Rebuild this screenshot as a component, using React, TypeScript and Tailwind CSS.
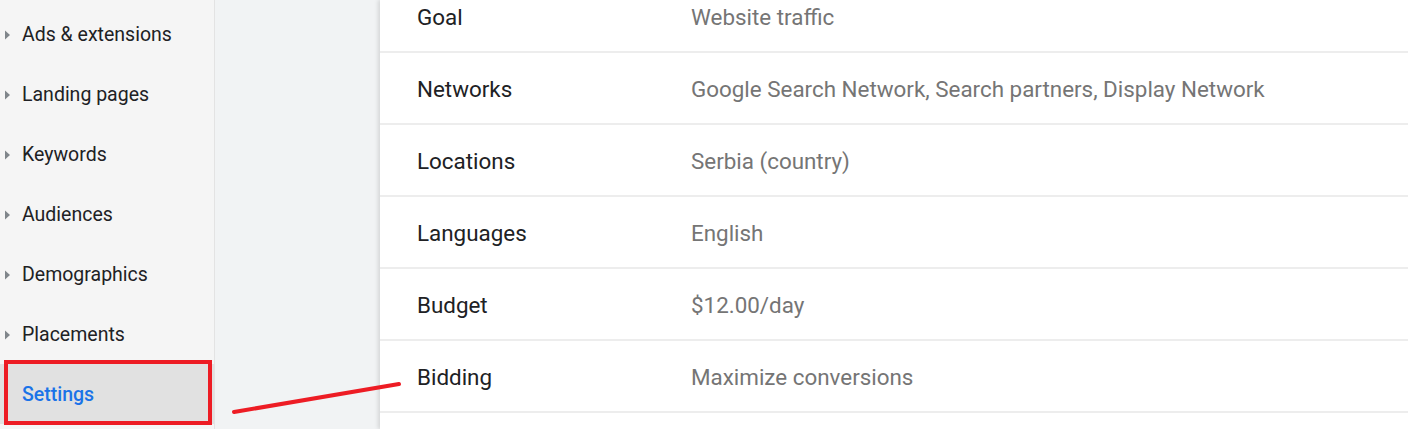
const navItems = [
  'Ads & extensions',
  'Landing pages',
  'Keywords',
  'Audiences',
  'Demographics',
  'Placements',
];

const settings = [
  { label: 'Goal', value: 'Website traffic' },
  { label: 'Networks', value: 'Google Search Network, Search partners, Display Network' },
  { label: 'Locations', value: 'Serbia (country)' },
  { label: 'Languages', value: 'English' },
  { label: 'Budget', value: '$12.00/day' },
  { label: 'Bidding', value: 'Maximize conversions' },
];

function Caret() {
  return (
    <svg width="5" height="10" viewBox="0 0 5 10" className="shrink-0">
      <path d="M0 0.5 L5 5 L0 9.5 Z" fill="#80868b" />
    </svg>
  );
}

export default function App() {
  return (
    <div
      className="relative flex h-[429px] w-[1408px] overflow-hidden bg-[#f1f3f4]"
      style={{ fontFamily: 'Roboto, "Liberation Sans", sans-serif' }}
    >
      {/* left nav */}
      <aside className="w-[215px] shrink-0 border-r border-[#e3e3e3] bg-[#f5f5f5] pt-[4px]">
        {navItems.map((item) => (
          <div key={item} className="flex h-[60px] items-center gap-[12px] pl-[5px] pt-[2px]">
            <Caret />
            <span className="text-[19.5px] text-[#202124]">{item}</span>
          </div>
        ))}
        <div className="flex h-[60px] items-center bg-[#e1e1e1] pl-[22px] pt-[2px]">
          <span className="text-[19.5px] font-medium text-[#1a73e8]">Settings</span>
        </div>
      </aside>

      {/* gutter */}
      <div className="w-[165px] shrink-0" />

      {/* settings card */}
      <main className="flex-1 bg-white shadow-[-2px_0_4px_rgba(0,0,0,0.12)]">
        <div className="-mt-[19px]">
          {settings.map((row) => (
            <div
              key={row.label}
              className="flex h-[72px] items-center border-b-2 border-[#ededed] pt-[4px] text-[22.4px]"
            >
              <div className="w-[311px] shrink-0 pl-[37px] text-[#202124]">{row.label}</div>
              <div className="text-[#757575]">{row.value}</div>
            </div>
          ))}
        </div>
      </main>

      {/* annotation: red box around Settings */}
      <div className="pointer-events-none absolute left-[4px] top-[360px] h-[65px] w-[208px] border-[4px] border-[#ed1c24]" />

      {/* annotation: red arrow line */}
      <svg
        className="pointer-events-none absolute left-0 top-0"
        width="1408"
        height="429"
        viewBox="0 0 1408 429"
      >
        <line x1="234" y1="412" x2="399" y2="384" stroke="#ed1c24" strokeWidth="4" strokeLinecap="round" />
      </svg>
    </div>
  );
}
